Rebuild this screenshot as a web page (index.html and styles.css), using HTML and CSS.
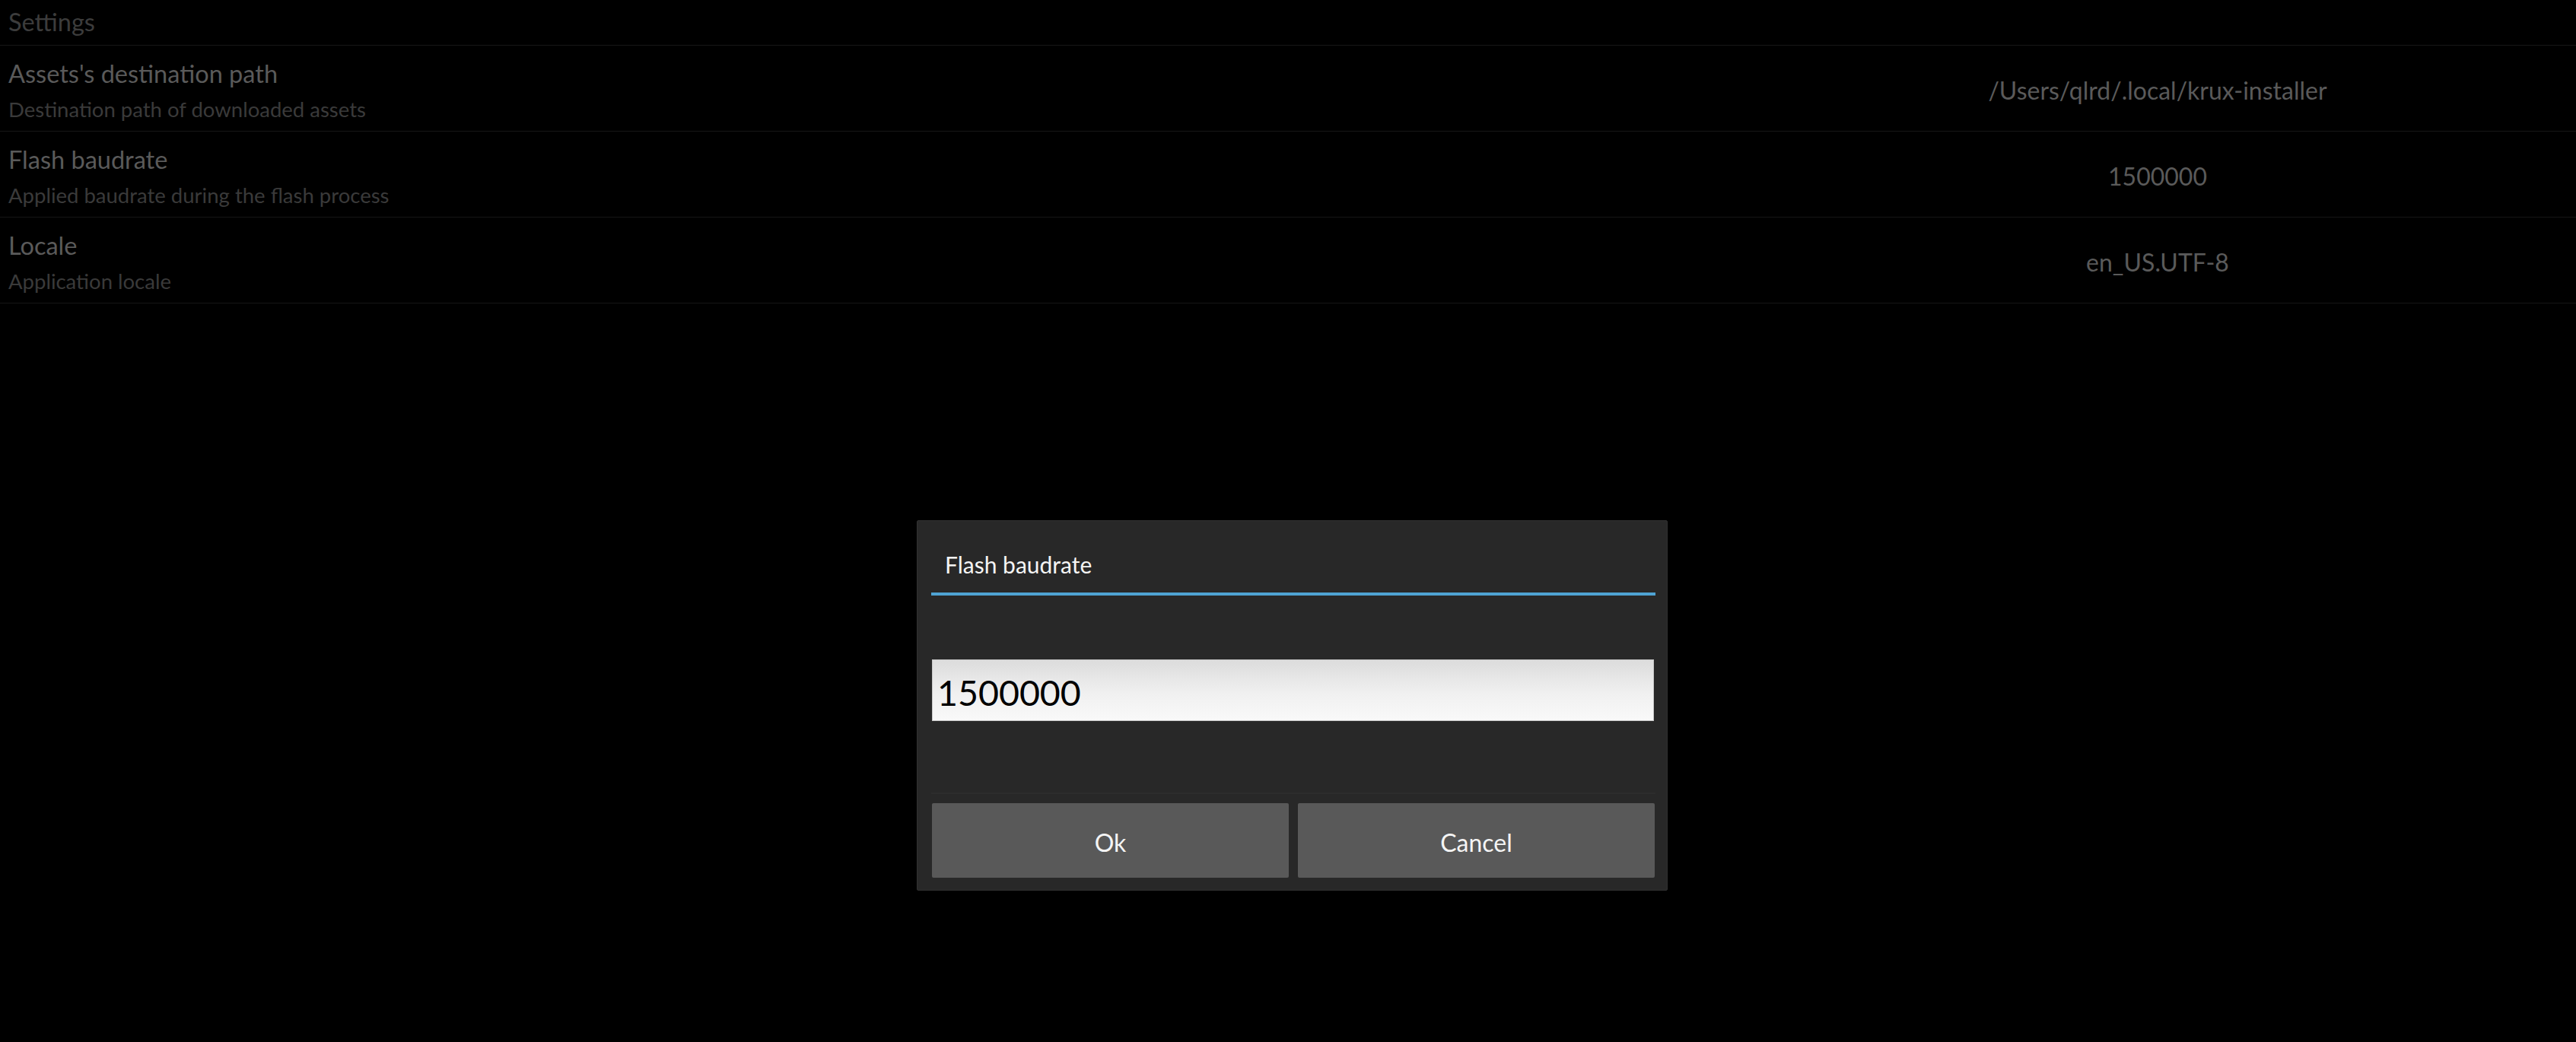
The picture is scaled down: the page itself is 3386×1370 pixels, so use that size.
FILE: index.html
```html
<!DOCTYPE html>
<html>
<head>
<meta charset="utf-8">
<link rel="stylesheet" href="styles.css">
</head>
<body>
<div class="screen">
  <div class="settings">
    <div class="header"><span>Settings</span></div>
    <div class="item">
      <div class="label">
        <div class="title">Assets's destination path</div>
        <div class="desc">Destination path of downloaded assets</div>
      </div>
      <div class="value">/Users/qlrd/.local/krux-installer</div>
    </div>
    <div class="item">
      <div class="label">
        <div class="title">Flash baudrate</div>
        <div class="desc">Applied baudrate during the flash process</div>
      </div>
      <div class="value">1500000</div>
    </div>
    <div class="item">
      <div class="label">
        <div class="title">Locale</div>
        <div class="desc">Application locale</div>
      </div>
      <div class="value">en_US.UTF-8</div>
    </div>
  </div>

  <div class="popup">
    <div class="popup-title">Flash baudrate</div>
    <div class="popup-sep"></div>
    <div class="popup-body">
      <div class="textinput">1500000</div>
    </div>
    <div class="popup-line"></div>
    <div class="buttons">
      <div class="btn">Ok</div>
      <div class="btn">Cancel</div>
    </div>
  </div>
</div>
</body>
</html>
```

FILE: styles.css
```css
html, body {
  margin: 0;
  padding: 0;
  background: #000;
}
.screen {
  position: relative;
  width: 3386px;
  height: 1370px;
  overflow: hidden;
  background: #000;
  font-family: Lato, "Liberation Sans", sans-serif;
}
.settings {
  display: flex;
  flex-direction: column;
}
.header {
  height: 60px;
  box-sizing: border-box;
  border-bottom: 1px solid #161616;
  padding-left: 11px;
  padding-top: 4px;
  color: #3c3c3c;
  font-size: 32.5px;
  line-height: 50px;
}
.item {
  height: 113px;
  box-sizing: border-box;
  border-bottom: 1px solid #161616;
  display: grid;
  grid-template-columns: 2286px 1100px;
}
.label {
  padding-left: 11px;
  padding-top: 18px;
}
.title {
  color: #5a5a5a;
  font-size: 32.5px;
  line-height: 38px;
}
.desc {
  color: #3a3a3a;
  font-size: 27.5px;
  line-height: 38px;
  margin-top: 9px;
}
.value {
  color: #5a5a5a;
  font-size: 32px;
  display: flex;
  align-items: center;
  justify-content: center;
  padding-top: 4px;
}
.popup {
  position: absolute;
  left: 1205px;
  top: 684px;
  width: 987px;
  height: 487px;
  box-sizing: border-box;
  background: #282828;
  border: 1px solid #313131;
  border-radius: 2px;
  padding: 0 15px 0 18px;
  display: flex;
  flex-direction: column;
}
.popup-title {
  height: 94px;
  box-sizing: border-box;
  padding-left: 18px;
  padding-top: 39px;
  color: #f4f4f4;
  font-size: 30px;
  line-height: 36px;
}
.popup-sep {
  height: 4px;
  background: #4fa3d3;
}
.popup-body {
  height: 259px;
  box-sizing: border-box;
  padding: 84px 2px 0 1px;
}
.textinput {
  height: 81px;
  box-sizing: border-box;
  border: 1px solid #c8c8c8;
  background: linear-gradient(#dcdcdc, #f0f0f0 55%, #f9f9f9);
  color: #000;
  font-size: 46.5px;
  line-height: 84px;
  padding-left: 6px;
}
.popup-line {
  height: 2px;
  background: #2d2d2d;
}
.buttons {
  margin-top: 12px;
  display: flex;
  gap: 12px;
  padding: 0 1px;
}
.btn {
  flex: 1;
  height: 98px;
  background: #595959;
  border-radius: 2px;
  color: #f4f4f4;
  font-size: 32px;
  display: flex;
  align-items: center;
  justify-content: center;
  padding-top: 4px;
  box-sizing: border-box;
}
```
